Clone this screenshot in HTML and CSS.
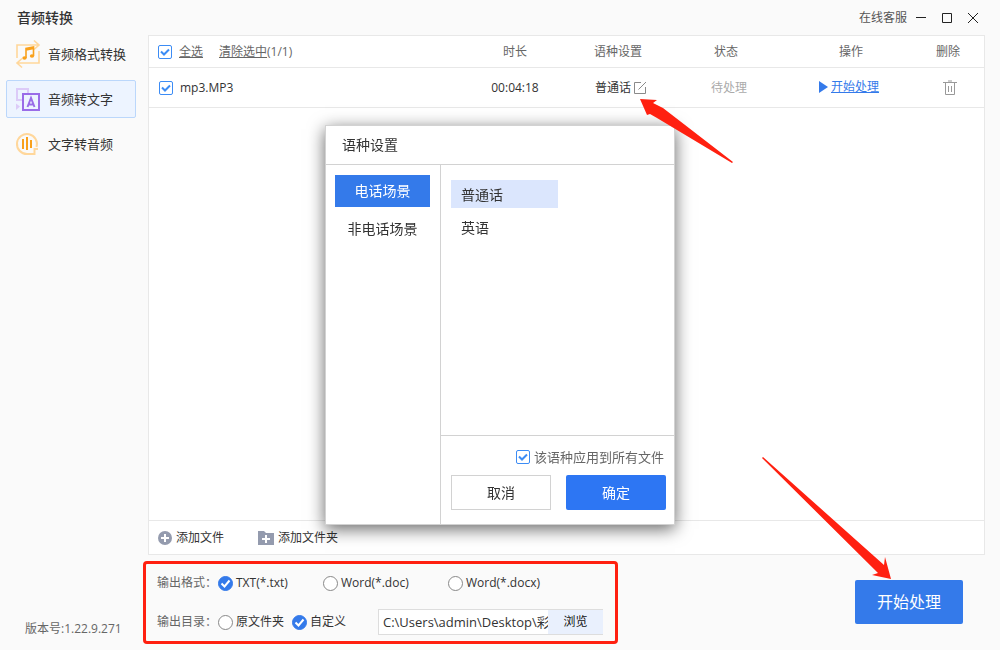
FILE: index.html
```html
<!DOCTYPE html>
<html lang="zh-CN">
<head>
<meta charset="utf-8">
<title>音频转换</title>
<link rel="stylesheet" href="styles.css">
</head>
<body>
<header class="titlebar">
  <h1 class="title">音频转换</h1>
  <a class="support" href="#">在线客服</a>
  <button class="win-btn" type="button" aria-label="最小化"><svg width="12" height="12" viewBox="0 0 12 12"><path d="M1 5.500h10"/></svg></button>
  <button class="win-btn" type="button" aria-label="最大化"><svg width="12" height="12" viewBox="0 0 12 12"><path d="M1.500 1.500h9v9h-9z"/></svg></button>
  <button class="win-btn" type="button" aria-label="关闭"><svg width="12" height="12" viewBox="0 0 12 12"><path d="M1 1l10 10M11 1L1 11"/></svg></button>
</header>

<div class="app">
  <aside class="sidebar">
    <nav class="nav">
      <a class="nav-item" href="#">
        <svg width="26" height="30" viewBox="0 0 26 30" fill="none">
          <g stroke="#ffd79b" stroke-width="1.600"><path d="M2 19V6h22M19 1.500l5 4.500-5 4.500"/><path d="M24 12v12H2M7 19.500l-5 4.500 5 4.500"/></g>
          <path d="M11 19V9.500l7.500-1.500v9M11 11l7.500-1.500" stroke="#f9a11b" stroke-width="1.600"/>
          <ellipse cx="9.500" cy="19" rx="2.200" ry="1.800" fill="#f9a11b"/><ellipse cx="17" cy="17" rx="2.200" ry="1.800" fill="#f9a11b"/>
        </svg>
        音频格式转换
      </a>
      <a class="nav-item active" href="#">
        <svg width="26" height="26" viewBox="0 0 26 26" fill="none">
          <path d="M7 14H2V3h11v4" stroke="#dccbf8" stroke-width="2"/>
          <path d="M1 17.500l4 3-4 3.500z" fill="#dccbf8"/>
          <path d="M8 8h16v16H8z" stroke="#9a6ce8" stroke-width="2"/>
          <path d="M12.500 21l3.500-9 3.500 9M13.500 18.500h5" stroke="#9a6ce8" stroke-width="2"/>
        </svg>
        音频转文字
      </a>
      <a class="nav-item" href="#">
        <svg width="26" height="26" viewBox="0 0 26 26" fill="none">
          <path d="M21.500 16A10 10 0 1 0 12 23h7.500v-5H23" stroke="#ffd79b" stroke-width="2"/>
          <path d="M8 8v10M12 6v13M16 9v8" stroke="#f9a11b" stroke-width="2"/>
        </svg>
        文字转音频
      </a>
    </nav>
    <p class="version">版本号:1.22.9.271</p>
  </aside>

  <main class="content">
    <section class="panel">
      <table class="files">
        <colgroup><col><col class="c-time"><col class="c-lang"><col class="c-state"><col class="c-action"><col class="c-del"></colgroup>
        <thead>
          <tr>
            <th class="name"><div class="cell"><input class="check" type="checkbox" id="all" checked><label class="link" for="all">全选</label><a class="clear" href="#"><u>清除选中</u>(1/1)</a></div></th>
            <th>时长</th><th>语种设置</th><th>状态</th><th>操作</th><th class="del">删除</th>
          </tr>
        </thead>
        <tbody>
          <tr>
            <td class="name"><div class="cell row-name"><input class="check" type="checkbox" id="file" checked><label for="file">mp3.MP3</label></div></td>
            <td>00:04:18</td>
            <td class="lang"><div class="cell center">普通话<button class="icon-btn" type="button" aria-label="编辑语种"><svg width="14" height="14" viewBox="0 0 14 14" fill="none" stroke="#8a8a8a"><path d="M8 1.500H1.500v11h11V6M5.500 8.500L13 1"/></svg></button></div></td>
            <td class="state">待处理</td>
            <td class="action"><a class="start-link" href="#"><svg width="9" height="12" viewBox="0 0 9 12"><path d="M0 0l9 6-9 6z" fill="#347aea"/></svg><u>开始处理</u></a></td>
            <td class="trash"><button class="icon-btn" type="button" aria-label="删除"><svg width="16" height="16" viewBox="0 0 16 16" fill="none" stroke="#999"><path d="M1 2.500h14M6 1h4M3.500 2.500v12h9v-12M6.500 6v6M9.500 6v6"/></svg></button></td>
          </tr>
        </tbody>
      </table>
      <div class="add-bar">
        <button class="add" type="button"><svg width="14" height="14" viewBox="0 0 14 14"><circle cx="7" cy="7" r="7" fill="#949bae"/><path d="M7 3v8M3 7h8" stroke="#fff" stroke-width="2"/></svg>添加文件</button>
        <button class="add" type="button"><svg width="16" height="14" viewBox="0 0 16 14"><path d="M0 0h6l2 2h8v12H0z" fill="#949bae"/><path d="M8 4v8M4 8h8" stroke="#fff" stroke-width="2"/></svg>添加文件夹</button>
      </div>
    </section>

    <footer class="footer">
      <form class="output">
        <div class="line" role="radiogroup" aria-label="输出格式">
          <span class="caption">输出格式：</span>
          <label class="option fmt"><input class="radio" type="radio" name="fmt" checked>TXT(*.txt)</label>
          <label class="option fmt2"><input class="radio" type="radio" name="fmt">Word(*.doc)</label>
          <label class="option"><input class="radio" type="radio" name="fmt">Word(*.docx)</label>
        </div>
        <div class="line" role="radiogroup" aria-label="输出目录">
          <span class="caption">输出目录：</span>
          <label class="option dir"><input class="radio" type="radio" name="dir">原文件夹</label>
          <label class="option"><input class="radio" type="radio" name="dir" checked>自定义</label>
          <div class="path"><input class="path-input" type="text" aria-label="输出路径" value="C:\Users\admin\Desktop\彩色"><button class="browse" type="button">浏览</button></div>
        </div>
      </form>
      <button class="primary" type="button">开始处理</button>
    </footer>
  </main>
</div>

<div class="dialog" role="dialog" aria-labelledby="dlg-title">
  <h2 class="dialog-title" id="dlg-title">语种设置</h2>
  <div class="scenes">
    <button class="scene selected" type="button">电话场景</button>
    <button class="scene" type="button">非电话场景</button>
  </div>
  <div class="dialog-main">
    <div class="langs">
      <button class="lang-item selected" type="button">普通话</button>
      <button class="lang-item" type="button">英语</button>
    </div>
    <div class="dialog-foot">
      <label class="apply"><input class="check" type="checkbox" checked>该语种应用到所有文件</label>
      <div class="buttons">
        <button class="btn" type="button">取消</button>
        <button class="btn ok" type="button">确定</button>
      </div>
    </div>
  </div>
</div>

<svg class="arrow arrow-edit" width="96" height="66" viewBox="0 0 96 66" aria-hidden="true"><path d="M1 1l17 1-4 3 10 5 70 54-1 1L18 20l-7-4-3 1z" fill="#ff2010"/></svg>
<svg class="arrow arrow-start" width="132" height="124" viewBox="0 0 132 124" aria-hidden="true"><path d="M1 1l1-1 121 108 1-8 6 22-19-4 6-2z" fill="#ff2010"/></svg>
</body>
</html>
```
FILE: styles.css
```css
* { box-sizing: border-box; }
body {
  margin: 0;
  min-height: 100vh;
  display: flex;
  flex-direction: column;
  position: relative;
  background: #fafafa;
  color: #333;
  font: 12px/18px "Open Sans", "Noto Sans CJK SC", sans-serif;
}
button, input { font: inherit; color: inherit; }
button { border: 0; padding: 0; background: none; cursor: pointer; }
a { color: inherit; text-decoration: none; }
svg { display: block; flex: none; }

.titlebar { display: flex; align-items: center; height: 35px; padding: 0 21px 0 17px; }
.title { margin: 0; flex: 1; font-size: 14px; font-weight: 500; }
.support { color: #555; margin-right: 8px; }
.win-btn { margin-right: 14px; }
.win-btn:last-child { margin-right: 0; }
.win-btn svg { fill: none; stroke: #222; }

.app { flex: 1; display: flex; }
.sidebar { width: 143px; padding: 0 7px 12px 6px; display: flex; flex-direction: column; justify-content: space-between; }
.nav { display: flex; flex-direction: column; gap: 7px; }
.nav-item { display: flex; align-items: center; gap: 7px; height: 38px; padding-left: 8px; border: 1px solid transparent; border-radius: 2px; font-size: 13px; }
.nav-item.active { background: #edf4ff; border-color: #bbd7fb; }
.version { margin: 0; padding-left: 19px; color: #666; }

.content { flex: 1; min-width: 0; display: flex; flex-direction: column; padding-right: 15px; }
.panel { flex: 1; display: flex; flex-direction: column; justify-content: space-between; margin-left: 5px; background: #fff; border: 1px solid #e8e8e8; }
.files { width: 100%; table-layout: fixed; border-collapse: separate; border-spacing: 0; text-align: center; }
.c-time { width: 104px; }
.c-lang { width: 102px; }
.c-state { width: 114px; }
.c-action { width: 136px; }
.c-del { width: 65px; }
.files th, .files td { padding: 0; border-bottom: 1px solid #e8e8e8; }
.files th { height: 32px; font-weight: 400; color: #666; }
.files td { height: 40px; }
.files .name { padding-left: 9px; }
.files .del { padding-right: 7px; }
.files .trash { padding-right: 4px; }
.files .action { padding-right: 4px; }
.files .lang { padding-left: 6px; }
.files .state { padding-left: 6px; color: #aaa; }
.cell { display: flex; align-items: center; }
.cell .check { margin-right: 7px; }
.row-name { padding-left: 1px; }
.center { justify-content: center; gap: 2px; }
.link { text-decoration: underline; }
.clear { margin-left: 16px; }
.start-link { display: inline-flex; align-items: center; gap: 3px; color: #347aea; }
.icon-btn { display: inline-block; vertical-align: middle; }

.check, .radio { appearance: none; flex: none; margin: 0; background: #fff center no-repeat; }
.check { width: 14px; height: 14px; border: 1px solid #3c8cf5; border-radius: 2px; }
.check:checked { background-image: url("data:image/svg+xml,%3Csvg xmlns='http://www.w3.org/2000/svg' width='12' height='12'%3E%3Cpath d='M2 5.500l3 3 5-5' fill='none' stroke='%233c8cf5' stroke-width='2'/%3E%3C/svg%3E"); }
.radio { width: 15px; height: 15px; border: 1px solid #888; border-radius: 50%; }
.radio:checked { border-color: #347aea; background-color: #347aea; background-image: url("data:image/svg+xml,%3Csvg xmlns='http://www.w3.org/2000/svg' width='13' height='13'%3E%3Cpath d='M2.500 6.500l3 3 5-6' fill='none' stroke='%23fff' stroke-width='2'/%3E%3C/svg%3E"); }

.add-bar { display: flex; gap: 34px; height: 34px; padding-left: 9px; border-top: 1px solid #e8e8e8; }
.add { display: flex; align-items: center; gap: 4px; }

.footer { display: flex; justify-content: space-between; align-items: flex-start; padding: 6px 22px 6px 0; }
.output { width: 475px; height: 83px; padding: 6px 12px 0 11px; border: 3px solid #ff2010; border-radius: 4px; }
.line { display: flex; align-items: center; height: 26px; }
.line + .line { margin-top: 13px; }
.caption { width: 61px; color: #666; white-space: nowrap; }
.option { display: flex; align-items: center; gap: 3px; white-space: nowrap; }
.fmt { width: 105px; }
.fmt2 { width: 125px; }
.dir { width: 74px; }
.path { display: flex; width: 225px; height: 26px; margin-left: auto; border: 1px solid #ddd; border-right: 0; }
.path-input { flex: 1; min-width: 0; padding: 0 0 0 4px; border: 0; background: #fff; font-size: 13px; }
.browse { width: 55px; background: #e9f0fd; color: #111; }
.primary { width: 108px; height: 44px; margin-top: 19px; border-radius: 2px; background: #347aea; color: #fff; font-size: 16px; }

.dialog {
  position: fixed; inset: 0; margin: auto;
  width: 350px; height: 400px;
  display: grid; grid-template: 39px 1fr / 115px 1fr;
  background: #fff; border: 1px solid #d2d2d2;
  box-shadow: 0 4px 16px rgba(0, 0, 0, .6);
  font-size: 14px;
}
.dialog-title { grid-column: 1 / 3; margin: 0; padding-left: 16px; border-bottom: 1px solid #d2d2d2; font-size: 14px; font-weight: 400; line-height: 38px; }
.scenes { display: flex; flex-direction: column; gap: 6px; padding: 10px 10px 0 9px; border-right: 1px solid #d2d2d2; }
.scene { height: 32px; }
.scene.selected { background: #347aea; color: #fff; }
.dialog-main { display: flex; flex-direction: column; justify-content: space-between; }
.langs { display: flex; flex-direction: column; gap: 5px; padding: 15px 10px 0; }
.lang-item { width: 107px; height: 28px; padding: 1px 0 0 10px; text-align: left; }
.lang-item.selected { background: #dbe6fd; }
.dialog-foot { padding: 12px 8px 14px 10px; border-top: 1px solid #d2d2d2; }
.apply { display: flex; align-items: center; justify-content: flex-end; gap: 4px; padding-right: 2px; font-size: 13px; color: #666; }
.buttons { display: flex; justify-content: space-between; margin-top: 9px; }
.btn { width: 100px; height: 35px; border: 1px solid #d2d2d2; background: #fff; }
.btn.ok { border: 0; border-radius: 2px; background: #2d76f3; color: #fff; }

.arrow { position: absolute; pointer-events: none; }
.arrow-edit { top: 98px; right: 265px; }
.arrow-start { right: 107px; bottom: 69px; }
```
